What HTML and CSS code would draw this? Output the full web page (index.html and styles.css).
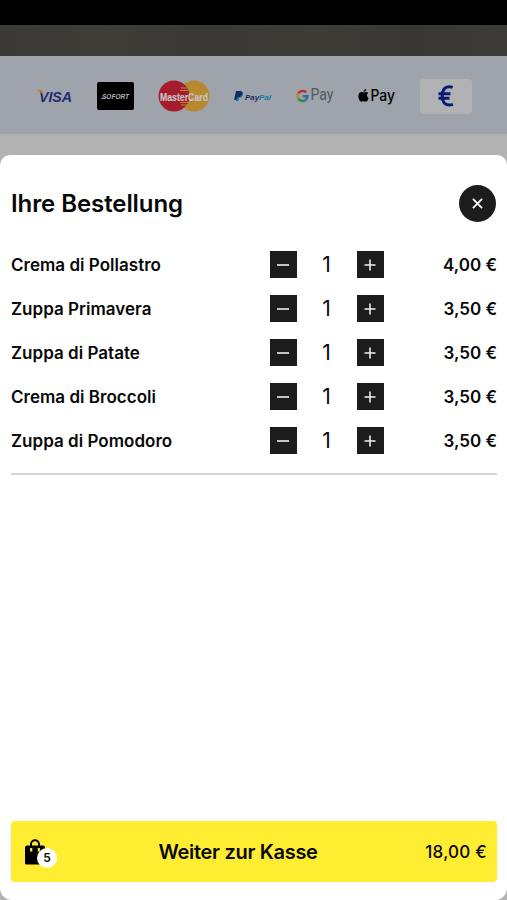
FILE: index.html
```html
<!DOCTYPE html>
<html lang="de">
<head>
<meta charset="utf-8">
<meta name="viewport" content="width=device-width, initial-scale=1">
<title>Ihre Bestellung</title>
<link rel="stylesheet" href="styles.css">
</head>
<body>
<div class="status-bar"></div>
<div class="backdrop-photo"></div>
<div class="payments">
  <svg class="visa" viewBox="0 0 36 30"><text x="2" y="20.500" textLength="33" lengthAdjust="spacingAndGlyphs" class="visa-text">VISA</text><path d="M0 9h3.500q2 0 2.400 1.600l1 4Q4.500 10.800 0 9.500z" fill="#b28338"/></svg>
  <svg class="sofort" viewBox="0 0 37 28"><rect width="37" height="28" rx="2" fill="#000"/><text x="5" y="16.500" textLength="27" lengthAdjust="spacingAndGlyphs" class="sofort-text">SOFORT</text><path d="M4 16.300h5" stroke="#b2b2b2" stroke-width=".8"/></svg>
  <svg class="mastercard" viewBox="0 0 52 32"><circle cx="36" cy="16" r="15.500" fill="#b88830"/><circle cx="16" cy="16" r="15.500" fill="#a51c2d"/><path d="M23 8h6M22 10.500h8M22 22.500h8M23 25h6" stroke="#b88830" stroke-width="1"/><text x="2" y="20.500" textLength="48" lengthAdjust="spacingAndGlyphs" class="mastercard-text">MasterCard</text></svg>
  <svg class="paypal" viewBox="0 0 38 20"><path d="M2 5h4.500Q9.500 5.500 8.500 9 7.600 11.500 4.500 11.300L3.800 14H.2z" fill="#122b62"/><path d="M8.500 7.200q1.300 4.300-3.300 4.600L4.300 15H2l.8-3.500q4.700 0 5.700-4.300z" fill="#137aa5"/><text x="11" y="13.500" textLength="26" lengthAdjust="spacingAndGlyphs" class="paypal-text"><tspan fill="#252b67">Pay</tspan><tspan fill="#127ba5">Pal</tspan></text></svg>
  <svg class="gpay" viewBox="0 0 38 24"><g fill="none" stroke-width="2.500"><path d="M10.200 8.300A5 5 0 0 0 2.400 9.400" stroke="#b43332"/><path d="M2.400 9.400a5 5 0 0 0 0 5.200" stroke="#b78b18"/><path d="M2.400 14.600a5 5 0 0 0 7.600 1" stroke="#278a49"/><path d="M10 15.600q1.500-1.500 1.500-3.300H6.800" stroke="#3468ad"/></g><text x="14.500" y="16" textLength="23" lengthAdjust="spacingAndGlyphs" class="gpay-text">Pay</text></svg>
  <svg class="applepay" viewBox="0 0 38 24"><path d="M8.200 4.800q.1 2.700-2.700 3.200Q5.400 5.600 8.200 4.800zM5.700 8.500q3-1.400 4.600.4-3 2.300.3 5-1.500 4.300-3.200 3.700-1.700-.8-3.500 0C1.800 18.100.1 14 .4 11.700.7 8.300 3.300 7.500 5.700 8.500z"/><text x="12.500" y="16.500" textLength="24.500" lengthAdjust="spacingAndGlyphs" class="applepay-text">Pay</text></svg>
  <div class="cash"><svg viewBox="0 0 16 22"><path d="M14.700 2.400C8 .1 4.300 4 4.300 11s3.700 10.700 10.700 8.400M.5 8.800h12M.5 13.300h11" fill="none" stroke="#061b73" stroke-width="3"/></svg></div>
</div>
<main class="sheet">
  <header class="sheet-header">
    <h1>Ihre Bestellung</h1>
    <button class="close" aria-label="Schließen"><svg viewBox="0 0 12 12"><path d="M1 1l10 10M11 1L1 11"/></svg></button>
  </header>
  <ul class="items">
    <li><span class="name">Crema di Pollastro</span><button class="step" aria-label="Weniger"><svg viewBox="0 0 12 12"><path d="M0 6h12"/></svg></button><span class="qty">1</span><button class="step" aria-label="Mehr"><svg viewBox="0 0 12 12"><path d="M.5 6h11M6 .5v11"/></svg></button><span class="price">4,00 €</span></li>
    <li><span class="name">Zuppa Primavera</span><button class="step" aria-label="Weniger"><svg viewBox="0 0 12 12"><path d="M0 6h12"/></svg></button><span class="qty">1</span><button class="step" aria-label="Mehr"><svg viewBox="0 0 12 12"><path d="M.5 6h11M6 .5v11"/></svg></button><span class="price">3,50 €</span></li>
    <li><span class="name">Zuppa di Patate</span><button class="step" aria-label="Weniger"><svg viewBox="0 0 12 12"><path d="M0 6h12"/></svg></button><span class="qty">1</span><button class="step" aria-label="Mehr"><svg viewBox="0 0 12 12"><path d="M.5 6h11M6 .5v11"/></svg></button><span class="price">3,50 €</span></li>
    <li><span class="name">Crema di Broccoli</span><button class="step" aria-label="Weniger"><svg viewBox="0 0 12 12"><path d="M0 6h12"/></svg></button><span class="qty">1</span><button class="step" aria-label="Mehr"><svg viewBox="0 0 12 12"><path d="M.5 6h11M6 .5v11"/></svg></button><span class="price">3,50 €</span></li>
    <li><span class="name">Zuppa di Pomodoro</span><button class="step" aria-label="Weniger"><svg viewBox="0 0 12 12"><path d="M0 6h12"/></svg></button><span class="qty">1</span><button class="step" aria-label="Mehr"><svg viewBox="0 0 12 12"><path d="M.5 6h11M6 .5v11"/></svg></button><span class="price">3,50 €</span></li>
  </ul>
  <button class="checkout">
    <span class="bag"><svg viewBox="0 0 20 26"><path d="M2 6.500h16q2 0 2 2V24q0 1.500-1.500 1.500h-17Q0 25.500 0 24V8.500q0-2 2-2z"/><path d="M6 10V5.200a4 4 0 0 1 8 0V10" fill="none" stroke="#000" stroke-width="2"/><path d="M6.200 9v3.600M13.800 9v3.600" stroke="#ffed32" stroke-width="2.200"/></svg><span class="badge">5</span></span>
    <span class="label">Weiter zur Kasse</span>
    <span class="total">18,00 €</span>
  </button>
</main>
</body>
</html>
```
FILE: styles.css
```css
* { box-sizing: border-box; }
body {
  margin: 0;
  height: 900px;
  display: flex;
  flex-direction: column;
  overflow: hidden;
  background: #b2b2b2;
  color: #080808;
  font-family: Inter, "Liberation Sans", sans-serif;
}
svg { display: block; overflow: visible; }
button { border: 0; padding: 0; font: inherit; color: inherit; }
.status-bar { height: 25px; flex: none; background: #000; }
.backdrop-photo {
  height: 31px;
  flex: none;
  background: linear-gradient(90deg, #3b3935, #3f3d38 22%, #3a3834 40%, #3e3c37 63%, #393733 81%, #3d3b37);
}
.payments {
  height: 78px;
  flex: none;
  display: flex;
  align-items: center;
  padding: 2px 35.5px 0 36.5px;
  justify-content: space-between;
  background: #9fa3ab;
}
.visa { width: 36px; height: 30px; }
.visa-text { font: italic 700 15px "Liberation Sans", sans-serif; fill: #222a70; }
.sofort { width: 37px; height: 28px; }
.sofort-text { font: italic 700 7px "Liberation Sans", sans-serif; fill: #b2b2b2; }
.mastercard { width: 52px; height: 32px; }
.mastercard-text { font: 700 10.5px "Liberation Sans", sans-serif; fill: #c4c4c4; stroke: #c4c4c4; stroke-width: .2px; }
.paypal { width: 38px; height: 20px; }
.paypal-text { font: italic 700 8px "Liberation Sans", sans-serif; }
.gpay { width: 38px; height: 24px; }
.gpay-text { font: 400 16px Roboto, sans-serif; fill: #55585d; }
.applepay { width: 38px; height: 24px; }
.applepay-text { font: 500 15.5px Inter, sans-serif; fill: #000; }
.cash {
  width: 52px;
  height: 35px;
  border-radius: 4px;
  background: #b1b2b3;
  display: flex;
  align-items: center;
  justify-content: center;
}
.cash svg { width: 16px; height: 22px; }
.sheet {
  flex: 1;
  margin-top: 20.5px;
  padding: 30.5px 10px 18.5px 11px;
  border-radius: 10px 10px 12px 12px;
  background: #fff;
  display: flex;
  flex-direction: column;
}
.sheet-header {
  display: flex;
  justify-content: space-between;
  align-items: center;
  height: 37px;
  padding-right: 1px;
}
h1 { margin: 0; font-size: 24px; line-height: 30px; font-weight: 600; letter-spacing: -.08px; }
.close {
  width: 37px;
  height: 37px;
  border-radius: 50%;
  background: #1c1c1c;
  display: grid;
  place-items: center;
}
.close svg { width: 11px; height: 11px; stroke: #fff; stroke-width: 2; }
.items {
  list-style: none;
  margin: 20.5px 0 0;
  padding: 0 0 10px;
  border-bottom: 2px solid #d1d5d5;
}
.items li {
  height: 44px;
  display: grid;
  grid-template-columns: 258.5px 27px 60px 27px 1fr;
  align-items: center;
  font-size: 17px;
  font-weight: 600;
}
.step { width: 27px; height: 27px; background: #1c1c1c; display: grid; place-items: center; }
.step svg { width: 12px; height: 12px; fill: none; stroke: #eee; stroke-width: 1.6; }
.qty { text-align: center; font-size: 21px; font-weight: 400; }
.name, .price { padding-top: 1px; }
.name { justify-self: start; letter-spacing: .02px; }
.price { text-align: right; }
.checkout {
  margin-top: auto;
  height: 60.5px;
  border-radius: 4px;
  background: #ffed32;
  display: grid;
  grid-template-columns: 110px 1fr 146px;
  align-items: center;
  padding: 1px 10px 0 14px;
}
.bag { position: relative; width: 20px; height: 26px; }
.bag svg { width: 20px; height: 26px; }
.badge {
  position: absolute;
  left: 12px;
  top: 9px;
  width: 20px;
  height: 20px;
  border-radius: 50%;
  background: #fff;
  font-size: 12px;
  font-weight: 600;
  line-height: 20px;
  text-align: center;
}
.label { font-size: 20px; font-weight: 600; letter-spacing: -.3px; text-align: center; white-space: nowrap; }
.total { font-size: 17px; font-weight: 500; letter-spacing: .25px; text-align: right; }
```
